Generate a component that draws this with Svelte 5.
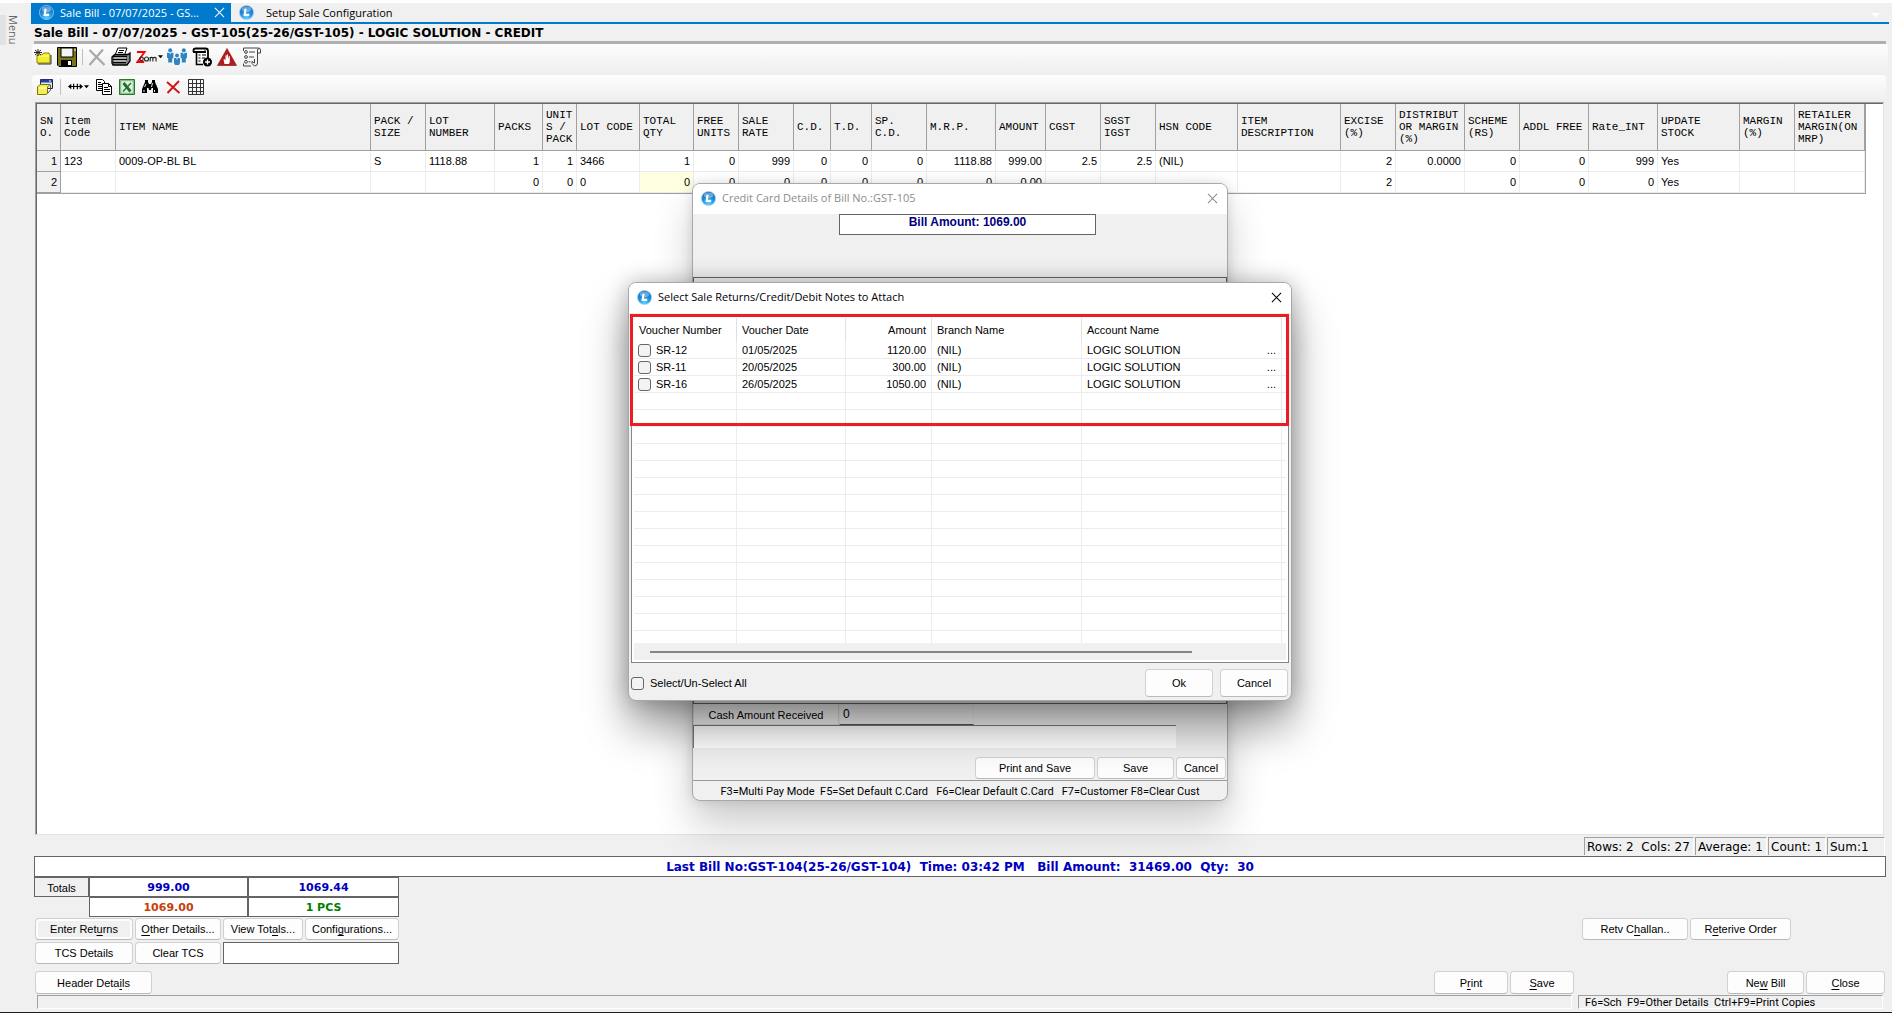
<script>
  const columns = [
    { label: 'SN\nO.', width: 24, num: true },
    { label: 'Item\nCode', width: 55 },
    { label: 'ITEM NAME', width: 255 },
    { label: 'PACK /\nSIZE', width: 55 },
    { label: 'LOT\nNUMBER', width: 69 },
    { label: 'PACKS', width: 48, num: true },
    { label: 'UNIT\nS /\nPACK', width: 34, num: true },
    { label: 'LOT CODE', width: 63 },
    { label: 'TOTAL\nQTY', width: 54, num: true },
    { label: 'FREE\nUNITS', width: 45, num: true },
    { label: 'SALE\nRATE', width: 55, num: true },
    { label: 'C.D.', width: 37, num: true },
    { label: 'T.D.', width: 41, num: true },
    { label: 'SP.\nC.D.', width: 55, num: true },
    { label: 'M.R.P.', width: 69, num: true },
    { label: 'AMOUNT', width: 50, num: true },
    { label: 'CGST', width: 55, num: true },
    { label: 'SGST\nIGST', width: 55, num: true },
    { label: 'HSN CODE', width: 82 },
    { label: 'ITEM\nDESCRIPTION', width: 103 },
    { label: 'EXCISE\n(%)', width: 55, num: true },
    { label: 'DISTRIBUT\nOR MARGIN\n(%)', width: 69, num: true },
    { label: 'SCHEME\n(RS)', width: 55, num: true },
    { label: 'ADDL FREE', width: 69, num: true },
    { label: 'Rate_INT', width: 69, num: true },
    { label: 'UPDATE\nSTOCK', width: 82 },
    { label: 'MARGIN\n(%)', width: 55 },
    { label: 'RETAILER\nMARGIN(ON\nMRP)', width: 70 }
  ];
  const tableWidth = columns.reduce((sum, c) => sum + c.width, 0);

  const rows = [
    ['1', '123', '0009-OP-BL BL', 'S', '1118.88', '1', '1', '3466', '1', '0', '999', '0', '0', '0', '1118.88', '999.00', '2.5', '2.5', '(NIL)', '', '2', '0.0000', '0', '0', '999', 'Yes', '', ''],
    ['2', '', '', '', '', '0', '0', '0', '0', '0', '0', '0', '0', '0', '0', '0.00', '', '', '', '', '2', '', '0', '0', '0', 'Yes', '', '']
  ];

  const vouchers = [
    { no: 'SR-12', date: '01/05/2025', amount: '1120.00' },
    { no: 'SR-11', date: '20/05/2025', amount: '300.00' },
    { no: 'SR-16', date: '26/05/2025', amount: '1050.00' }
  ];
  const emptyRows = Array.from({ length: 15 }, (_, i) => i);
</script>

{#snippet logo()}
  <svg class="logo" viewBox="0 0 16 16" aria-hidden="true">
    <defs>
      <radialGradient id="orb" cx="50%" cy="85%" r="85%">
        <stop offset="0" stop-color="#5fd0ff" />
        <stop offset="0.5" stop-color="#1c8fe0" />
        <stop offset="1" stop-color="#0f62b4" />
      </radialGradient>
    </defs>
    <circle cx="8" cy="8" r="7.5" fill="url(#orb)" stroke="#a9d4f2" stroke-width="0.8" />
    <ellipse cx="8" cy="4.6" rx="5" ry="3" fill="#fff" opacity="0.35" />
    <path d="M7 4L6 10.5H10.8" fill="none" stroke="#fff" stroke-width="2.2" />
  </svg>
{/snippet}

{#snippet cross()}
  <svg class="cross" viewBox="0 0 12 12" aria-hidden="true"><path d="M1 1L11 11M11 1L1 11" fill="none" stroke="currentColor" stroke-width="1.1" /></svg>
{/snippet}

<div class="app">
  <aside><button class="menu">Menu</button></aside>

  <main>
    <nav class="tabs">
      <div class="tab active">{@render logo()}<span>Sale Bill - 07/07/2025 - GS...</span><button class="bare" aria-label="Close tab">{@render cross()}</button></div>
      <div class="tab">{@render logo()}<span>Setup Sale Configuration</span></div>
      <button class="bare more" aria-label="More tabs"><svg width="9" height="5" viewBox="0 0 9 5"><path d="M0 0H9L4.500 4.500Z" fill="#fff" /></svg></button>
    </nav>

    <h1>Sale Bill - 07/07/2025 - GST-105(25-26/GST-105) - LOGIC SOLUTION - CREDIT</h1>

    <div class="toolbar first">
      <button class="bare i18" aria-label="New">
        <svg viewBox="0 0 18 16"><path d="M3 6h5l1.500-2H15l1 2v8H3z" fill="#f4ee2a" stroke="#8d8400" /><path d="M5 7h10" stroke="#fffbb0" /><path d="M17 6v9H4" stroke="#333" fill="none" /><path d="M4 0v7M0 3.500h8M1 1l6 5M7 1L1 6" stroke="#111" stroke-width="0.900" /></svg>
      </button>
      <button class="bare i20" aria-label="Save">
        <svg viewBox="0 0 20 20"><path d="M0.500 0.500H19.500V19.500H2L0.500 18z" fill="#77771a" stroke="#000" /><path d="M4 1h12v9H4z" fill="#f4f4f4" stroke="#000" /><path d="M4 13h11v6.500H4z" fill="#000" /><path d="M11 14h3v4h-3z" fill="#fff" /><path d="M17.500 2h1v2h-1z" fill="#fff" /></svg>
      </button>
      <i class="sep"></i>
      <button class="bare i18" aria-label="Delete">
        <svg viewBox="0 0 18 18"><path d="M1.500 2L16.500 17M15 1.500L1.500 17" fill="none" stroke="#a9a9a9" stroke-width="2.200" /></svg>
      </button>
      <button class="bare i20" aria-label="Print">
        <svg viewBox="0 0 20 20"><path d="M7 1h9l-2.500 7H4z" fill="#fff" stroke="#000" /><path d="M8 3.500h5M7 5.500h5" stroke="#000" /><path d="M2 9l2-1.500h13L19 6v8l-3 4H2L1 16v-6z" fill="#888" stroke="#000" stroke-width="1.300" /><path d="M2 9.500h14M2 12.500h14M2 15.500h13" stroke="#000" stroke-width="1.300" /><path d="M3 11h12M3 14h12" stroke="#eee" /></svg>
      </button>
      <button class="bare zoomer" aria-label="Zoom">
        <svg width="21" height="16" viewBox="0 0 23 16"><path d="M1 2.500H9.500L1.500 13.500H9" fill="none" stroke="#f00" stroke-width="2" /><g fill="none" stroke="#222" stroke-width="1.200"><circle cx="6" cy="10" r="2" /><circle cx="11.500" cy="10.200" r="2.200" /><path d="M15.500 13V8M15.500 9.500Q17 7.500 18.500 9.200V13M18.500 9.500Q20.500 7.500 22 9.200V13" /></g></svg>
        <svg width="5" height="4" viewBox="0 0 6 4"><path d="M0 0H6L3 3.500Z" /></svg>
      </button>
      <button class="bare i20" aria-label="Customers">
        <svg viewBox="0 0 20 18"><g fill="#2f83c0"><circle cx="3.200" cy="2.200" r="2" /><circle cx="16.800" cy="2.200" r="2" /><circle cx="10" cy="7.500" r="1.900" /><path d="M0 4.800h6.400v5l-1.200 1V14.500h-4v-4L0 9.500z" /><path d="M13.600 4.800H20v5l-1.200 1V14.500h-4v-4l-1.200-1z" /><path d="M7 10h6v5l-1 2H8l-1-2z" /></g><path d="M2.400 4.800l.8 2 .8-2M9.200 10l.8 2 .8-2M16 4.800l.8 2 .8-2" fill="#e6f2fb" /></svg>
      </button>
      <button class="bare i20" aria-label="Add document">
        <svg viewBox="0 0 20 20"><path d="M3 1.500H13.500Q16 1.500 16 4V11M1.500 5V3.500Q1.500 1.500 3.500 1.500M1 5H13V3.500" fill="none" stroke="#000" stroke-width="1.800" /><path d="M4.500 5V17.500H11" fill="none" stroke="#000" stroke-width="1.600" /><path d="M6.500 8h2M10 8h4M6.500 11h2M10 11h3M6.500 14h2" stroke="#000" stroke-width="1.200" /><circle cx="15.500" cy="15" r="4.500" /><path d="M15.500 12.500v5M13 15h5" stroke="#fff" stroke-width="1.300" /></svg>
      </button>
      <button class="bare i20" aria-label="Stop alert">
        <svg viewBox="0 0 20 18"><path d="M10 0.500L19.500 17.500H0.500Z" fill="#b31b1b" stroke="#7d1010" stroke-width="0.600" /><path d="M7.500 16L6.500 11.500 7.500 11 8.500 12.500V7.500L9.500 7V11L10 6.500h1V11L12 8h.800V14L12 16z" fill="#fff" /></svg>
      </button>
      <button class="bare i20" aria-label="Checklist">
        <svg viewBox="0 0 20 20"><g fill="none" stroke="#444" stroke-width="1"><path d="M1.500 4V1H15.500Q18.500 0.500 18.500 3V6H15.500V16Q15.500 19 12.500 19L10 16.500V14.500L12.500 16V12M15.500 6V3Q15.500 1.500 17 1.500M1.500 16.500V19H9" /><circle cx="4" cy="5" r="1.400" /><circle cx="4" cy="10" r="1.400" /><circle cx="4" cy="14.800" r="1.400" /><path d="M7 5h6M7 10h5M6.500 14.800h2" /></g></svg>
      </button>
    </div>

    <div class="toolbar second">
      <button class="bare i16" aria-label="Card">
        <svg viewBox="0 0 16 16"><path d="M3.500 0.500h12v9h-12z" fill="#dfe6f5" stroke="#223" /><path d="M3.500 0.500h12v3h-12z" fill="#22409a" /><path d="M12 2h2" stroke="#fff" /><path d="M0.500 8L3 5.500h10L10.500 8v6.500L9 15.500H0.500z" fill="#f3ee56" stroke="#7d7500" /><path d="M2 9h8" stroke="#fff" /><path d="M11 14l2.500-3V6" fill="none" stroke="#555" /></svg>
      </button>
      <i class="sep"></i>
      <button class="bare zoomer" aria-label="Column width">
        <svg width="15" height="9" viewBox="0 0 16 9"><path d="M1 4.500H15M6 1.500v6M10 1.500v6" stroke="#000" stroke-width="1.300" /><path d="M0 4.500L3.500 1.500v6zM16 4.500L12.500 1.500v6z" /></svg>
        <svg width="5" height="4" viewBox="0 0 6 4"><path d="M0 0H6L3 3.500Z" /></svg>
      </button>
      <button class="bare i16" aria-label="Copy">
        <svg viewBox="0 0 16 16"><g fill="#fff" stroke="#000"><path d="M0.500 0.500H6.500L8.500 2.500V11.500H0.500z" /><path d="M6.500 4.500h6l3 3v8h-9z" /></g><path d="M2 3.500h3M2 5.500h4M2 7.500h4M2 9.500h4M8 8.500h4M8 10.500h6M8 12.500h6" stroke="#000" /><path d="M12.500 4.500v3h3" fill="none" stroke="#000" /></svg>
      </button>
      <button class="bare i16" aria-label="Export to Excel">
        <svg viewBox="0 0 16 16"><path d="M0.500 0.500h15v15H0.500z" fill="#e4f1e2" stroke="#1f7a2a" /><path d="M1.500 1.500h13v13h-13z" fill="none" stroke="#2f8b3a" stroke-width="1.600" stroke-dasharray="1 1" /><path d="M4.500 4l7 8.500" stroke="#1b7426" stroke-width="2.800" /><path d="M12 4l-8 8.500" stroke="#1b7426" stroke-width="1.400" /></svg>
      </button>
      <button class="bare i16" aria-label="Find">
        <svg viewBox="0 0 16 16"><path d="M3 1h3v2l1 2h2l1-2V1h3v2l3 7v4h-5V9H9.500L9 11H7L6.500 9H5v5H0v-4l3-7z" /><path d="M2.500 8l1.500-3M2 11v2M9.500 8l1-4M12.500 11v2" stroke="#fff" stroke-width="0.900" /></svg>
      </button>
      <button class="bare i16" aria-label="Remove">
        <svg viewBox="0 0 16 16"><path d="M2 3L14.500 14M14 2L2.500 14" fill="none" stroke="#d41212" stroke-width="1.900" /></svg>
      </button>
      <button class="bare i16" aria-label="Grid">
        <svg viewBox="0 0 16 16"><path d="M0.500 0.500h15v15H0.500zM4.500 0v16M8.500 0v16M12.500 0v16M0 4.500h16M0 8.500h16M0 12.500h16" fill="none" stroke="#333" /></svg>
      </button>
    </div>

    <section class="sheet">
      <table class="items" style:width="{tableWidth}px">
        <colgroup>{#each columns as c}<col style:width="{c.width}px" />{/each}</colgroup>
        <thead><tr>{#each columns as c}<th>{c.label}</th>{/each}</tr></thead>
        <tbody>
          {#each rows as row, r}
            <tr>{#each row as cell, i}<td class:num={columns[i].num} class:sn={i === 0} class:current={r === 1 && i === 8}>{cell}</td>{/each}</tr>
          {/each}
        </tbody>
      </table>
    </section>

    <div class="stats"><span class="size">Rows: 2&nbsp; Cols: 27</span><span class="avg">Average: 1</span><span>Count: 1</span><span>Sum:1</span></div>

    <div class="lastbill">Last Bill No:GST-104(25-26/GST-104)&nbsp; Time: 03:42 PM&nbsp;&nbsp; Bill Amount:&nbsp; 31469.00&nbsp; Qty:&nbsp; 30</div>

    <div class="totals">
      <span class="cap">Totals</span><b>999.00</b><b>1069.44</b>
      <b class="orange">1069.00</b><b class="green">1 PCS</b>
    </div>

    <div class="actions">
      <div class="left">
        <button class="btn focus">Enter Ret<u>u</u>rns</button>
        <button class="btn"><u>O</u>ther Details...</button>
        <button class="btn">View Tot<u>a</u>ls...</button>
        <button class="btn">Confi<u>g</u>urations...</button>
        <button class="btn">TCS Details</button>
        <button class="btn">Clear TCS</button>
        <input class="note" aria-label="TCS" />
      </div>
      <div class="right">
        <button class="btn challan">Retv C<u>h</u>allan..</button>
        <button class="btn order">R<u>e</u>terive Order</button>
      </div>
    </div>

    <div class="commands">
      <button class="btn header">Header Deta<u>i</u>ls</button>
      <button class="btn print">P<u>r</u>int</button>
      <button class="btn save"><u>S</u>ave</button>
      <button class="btn new">Ne<u>w</u> Bill</button>
      <button class="btn close"><u>C</u>lose</button>
    </div>

    <footer><span class="strip"></span><span class="keys">F6=Sch&nbsp; F9=Other Details&nbsp; Ctrl+F9=Print Copies</span></footer>

    <div class="overlay">
      <section class="dialog card" role="dialog" aria-label="Credit Card Details">
        <header>{@render logo()}<span>Credit Card Details of Bill No.:GST-105</span><button class="bare" aria-label="Close">{@render cross()}</button></header>
        <div class="amountbox">Bill Amount: 1069.00</div>
        <div class="middle"></div>
        <div class="cash"><label for="cash">Cash Amount Received</label><input id="cash" value="0" /></div>
        <div class="panel"></div>
        <div class="buttons"><button class="btn ps">Print and Save</button><button class="btn sv">Save</button><button class="btn cn">Cancel</button></div>
        <p>F3=Multi Pay Mode&nbsp; F5=Set Default C.Card&nbsp;&nbsp; F6=Clear Default C.Card&nbsp;&nbsp; F7=Customer F8=Clear Cust</p>
      </section>
    </div>

    <div class="overlay front">
      <section class="dialog attach" role="dialog" aria-label="Select Sale Returns">
        <header>{@render logo()}<span>Select Sale Returns/Credit/Debit Notes to Attach</span><button class="bare" aria-label="Close">{@render cross()}</button></header>
        <div class="list">
          <table class="vouchers">
            <colgroup><col class="c1" /><col class="c2" /><col class="c3" /><col class="c4" /><col class="c5" /><col /></colgroup>
            <thead><tr><th>Voucher Number</th><th>Voucher Date</th><th class="num">Amount</th><th>Branch Name</th><th>Account Name</th><th></th></tr></thead>
            <tbody>
              {#each vouchers as v}
                <tr><td><label><input type="checkbox" />{v.no}</label></td><td>{v.date}</td><td class="num">{v.amount}</td><td>(NIL)</td><td><div class="acct"><span>LOGIC SOLUTION</span><span>...</span></div></td><td></td></tr>
              {/each}
              {#each emptyRows as n (n)}<tr><td></td><td></td><td></td><td></td><td></td><td></td></tr>{/each}
            </tbody>
          </table>
          <div class="scroll"><i></i></div>
          <div class="mark"></div>
        </div>
        <div class="foot">
          <label><input type="checkbox" />Select/Un-Select All</label>
          <button class="btn ok">Ok</button><button class="btn ok">Cancel</button>
        </div>
      </section>
    </div>
  </main>
</div>

<style>
  :global(body) { background: #f0f0f0; }
  * { box-sizing: border-box; }
  .app {
    display: flex;
    min-height: 100vh;
    border-top: 3px solid #fff;
    border-bottom: 1px solid #1c1c22;
    background: #f0f0f0;
    color: #000;
    font: 11px/14px "Liberation Sans", Arial, sans-serif;
  }
  aside { flex: none; width: 28px; padding-top: 12px; }
  .menu {
    width: 26px; height: 30px; padding: 0; border: 0;
    background: linear-gradient(90deg, #e2e2e2 6px, transparent 6px);
    color: #666; font: 11px/26px "Open Sans", sans-serif; writing-mode: vertical-rl;
  }
  main { position: relative; flex: 1; min-width: 0; display: flex; flex-direction: column; padding: 0 6px 0 4px; }
  .bare { display: flex; align-items: center; padding: 0; border: 0; background: none; color: inherit; }
  .logo { flex: none; width: 15px; height: 15px; }
  .cross { width: 11px; height: 11px; }

  .tabs { flex: none; display: flex; height: 21px; margin: 0 -3px 0 -1px; border-bottom: 2px solid #007acc; font: 11px/18px "Open Sans", sans-serif; }
  .tab { display: flex; align-items: center; padding-left: 8px; }
  .tab span { padding-left: 12px; white-space: nowrap; }
  .tab.active { width: 200px; background: #007acc; color: #fff; }
  .tab.active span { padding-left: 6px; }
  .tab.active .bare { margin: 0 6px 0 auto; }
  .more { margin: 6px 9px 0 auto; }

  h1 { flex: none; height: 20px; margin: 0 0 0 2px; border-bottom: 3px solid #b0b0b0; font: bold 12px/18px "DejaVu Sans", Verdana, sans-serif; }
  .toolbar { flex: none; display: flex; align-items: center; border-radius: 3px; background: linear-gradient(#fdfdfd, #eee); }
  .first { height: 31px; margin-right: -2px; padding: 0 0 5px 2px; gap: 5px; }
  .second { height: 27px; padding: 0 0 4px 5px; gap: 7px; }
  .sep { width: 1px; height: 16px; background: #c0c0c0; }
  .i16 svg { width: 16px; height: 16px; }
  .i18 svg { width: 18px; height: 18px; }
  .i20 svg { width: 20px; height: 20px; }
  .zoomer { gap: 1px; }
  .first .zoomer { margin-right: -1px; }

  .sheet { flex: 1; margin: 0 2px 0 3px; border: 1px solid #a0a0a0; border-right-color: #e3e3e3; border-bottom-color: #e3e3e3; box-shadow: inset 1px 1px #696969; padding: 1px 0 0 1px; background: #fff; }
  table { border-spacing: 0; table-layout: fixed; }
  .items { border-right: 1px solid #a0a0a0; border-bottom: 1px solid #a0a0a0; }
  .items th { height: 47px; padding: 0 0 0 3px; border-right: 1px solid #a0a0a0; border-bottom: 1px solid #a0a0a0; background: #f0f0f0; font: 11px/12px "Liberation Mono", "Courier New", monospace; text-align: left; white-space: pre; }
  .items td { height: 21px; padding: 0 3px; border-right: 1px solid #ececec; border-bottom: 1px solid #ececec; white-space: nowrap; }
  .items td.num { text-align: right; }
  .items td.sn { background: #f0f0f0; border-color: #a0a0a0; }
  .items td.current { background: #ffffe1; }

  .stats { flex: none; display: flex; justify-content: flex-end; gap: 1px; height: 18px; margin: 2px 1px 1px 0; font: 12px/18px "DejaVu Sans", Verdana, sans-serif; }
  .stats span { width: 58px; padding-left: 2px; border: 1px solid #a0a0a0; border-right-color: #fff; border-bottom: 0; line-height: 18px; white-space: nowrap; }
  .stats .size { width: 110px; }
  .stats .avg { width: 72px; }
  .lastbill { flex: none; height: 21px; margin-left: 2px; border: 1px solid #646464; background: #fff; color: #0000c0; font: bold 12px/20px "DejaVu Sans", Verdana, sans-serif; text-align: center; }
  .totals { flex: none; display: grid; grid-template-columns: 55px 159px 151px; grid-auto-rows: 20px; margin-left: 2px; text-align: center; }
  .totals > * { border: 1px solid #646464; background: #fff; color: #0000c0; font: bold 11px/20px "DejaVu Sans", Verdana, sans-serif; }
  .totals .cap { background: #f0f0f0; color: #000; font: 11px/20px "Liberation Sans", sans-serif; }
  .totals .orange { grid-column: 2; color: #c8400a; }
  .totals .green { color: #008000; }

  .btn { height: 22px; padding: 0; border: 1px solid #d0d0d0; border-bottom-color: #bababa; border-radius: 4px; background: #fdfdfd; color: #000; font: 11px/18px "Liberation Sans", sans-serif; white-space: nowrap; }
  .btn u { text-underline-offset: 2px; }
  .focus { background: #f0f0f0; box-shadow: inset 0 0 0 2px #fdfdfd; }
  .actions { flex: none; display: flex; justify-content: space-between; align-items: flex-start; margin: 1px 95px 7px 3px; }
  .left { display: grid; grid-template-columns: 98px 86px 80px 94px; gap: 2px; }
  .note { grid-column: 3 / 5; min-width: 0; border: 1px solid #646464; background: #fff; }
  .right { display: flex; gap: 2px; }
  .challan { width: 106px; }
  .order { width: 101px; }
  .commands { flex: none; display: flex; gap: 2px; margin: 0 1px 1px 3px; }
  .commands .btn { height: 23px; }
  .header { width: 117px; margin-right: auto; }
  .print { width: 74px; }
  .save { width: 64px; margin-right: 151px; }
  .new { width: 77px; }
  .close { width: 79px; }
  footer { flex: none; display: flex; gap: 6px; height: 14px; margin: 0 3px 3px 5px; font-family: Roboto, sans-serif; }
  footer span { border: 1px solid #a0a0a0; border-right-color: #fff; border-bottom-color: #fff; }
  .strip { flex: 1; }
  .keys { width: 305px; padding-left: 6px; line-height: 14px; white-space: nowrap; }

  .overlay { position: absolute; inset: 180px 0 auto 0; display: flex; justify-content: center; pointer-events: none; }
  .front { top: 279px; }
  .dialog { display: flex; flex-direction: column; border: 1px solid #a8a8a8; border-radius: 8px; background: #f0f0f0; overflow: hidden; pointer-events: auto; }
  .dialog header { display: flex; align-items: center; height: 30px; padding: 0 9px 2px 8px; background: #fff; font: 11px/20px "Open Sans", sans-serif; }
  .dialog header span { flex: 1; padding-left: 6px; }
  .card { width: 536px; box-shadow: 0 24px 40px rgba(0, 0, 0, 0.2), 0 0 12px rgba(0, 0, 0, 0.12); }
  .card header { color: #8c8c8c; }
  .amountbox { align-self: center; width: 257px; height: 21px; margin-left: 15px; border: 1px solid #646464; background: #fff; color: #000080; font: bold 12px/14px "Liberation Sans", sans-serif; text-align: center; }
  .middle { height: 427px; margin-top: 42px; border: 1px solid #646464; }
  .cash { display: flex; height: 21px; }
  .cash label { width: 146px; border: 1px solid #d8d8d8; border-top: 0; line-height: 22px; text-align: center; }
  .cash input { width: 135px; padding: 0 3px 2px; border: 1px solid #e8e8e8; border-bottom-color: #555; background: #f0f0f0; font: 12px/14px "Liberation Sans", sans-serif; }
  .panel { width: 483px; height: 23px; border-top: 1px solid #777; border-left: 1px solid #777; background: #fff; }
  .buttons { display: flex; justify-content: flex-end; gap: 2px; padding: 9px 1px 1px; }
  .ps { width: 120px; }
  .sv { width: 77px; }
  .cn { width: 50px; }
  .card p { margin: 0; height: 20px; padding-left: 0; border-top: 1px solid #999; font-family: Roboto, sans-serif; line-height: 21px; text-align: center; white-space: nowrap; }
  .attach { width: 664px; box-shadow: 0 26px 44px rgba(0, 0, 0, 0.4), 0 0 22px rgba(0, 0, 0, 0.24); }
  .list { position: relative; margin: 2px 2px 0; padding: 2px; border: 1px solid #828790; background: #fff; }
  .vouchers { width: 100%; }
  .c1 { width: 103px; }
  .c2 { width: 109px; }
  .c3 { width: 86px; }
  .c4 { width: 150px; }
  .c5 { width: 200px; }
  .vouchers th { height: 24px; padding: 0 5px; border-right: 1px solid #e0e0e0; font-weight: normal; text-align: left; white-space: nowrap; }
  .vouchers td { height: 17px; padding: 1px 5px 0; border-right: 1px solid #ececec; border-bottom: 1px solid #ececec; white-space: nowrap; line-height: 15px; }
  .vouchers .num { text-align: right; }
  .vouchers th:last-child, .vouchers td:last-child { padding: 0; border-right: 0; }
  .vouchers td:first-child { padding-left: 4px; }
  .vouchers label, .foot label { display: flex; align-items: center; gap: 5px; }
  input[type='checkbox'] { appearance: none; flex: none; width: 13px; height: 13px; margin: 0; border: 1px solid #666; border-radius: 3px; background: #f3f3f3; }
  .acct { display: flex; justify-content: space-between; }
  .scroll { position: relative; height: 17px; margin-top: -5px; padding: 8px 94px 0 16px; background: #f0f0f0; }
  .scroll i { display: block; height: 2px; background: #858585; }
  .mark { position: absolute; inset: -2px -1px auto -2px; height: 112px; border: 3px solid #ed1c24; }
  .foot { display: flex; align-items: center; gap: 7px; padding: 6px 3px 3px 2px; }
  .foot label { flex: 1; gap: 6px; }
  .ok { width: 68px; height: 28px; }
</style>
